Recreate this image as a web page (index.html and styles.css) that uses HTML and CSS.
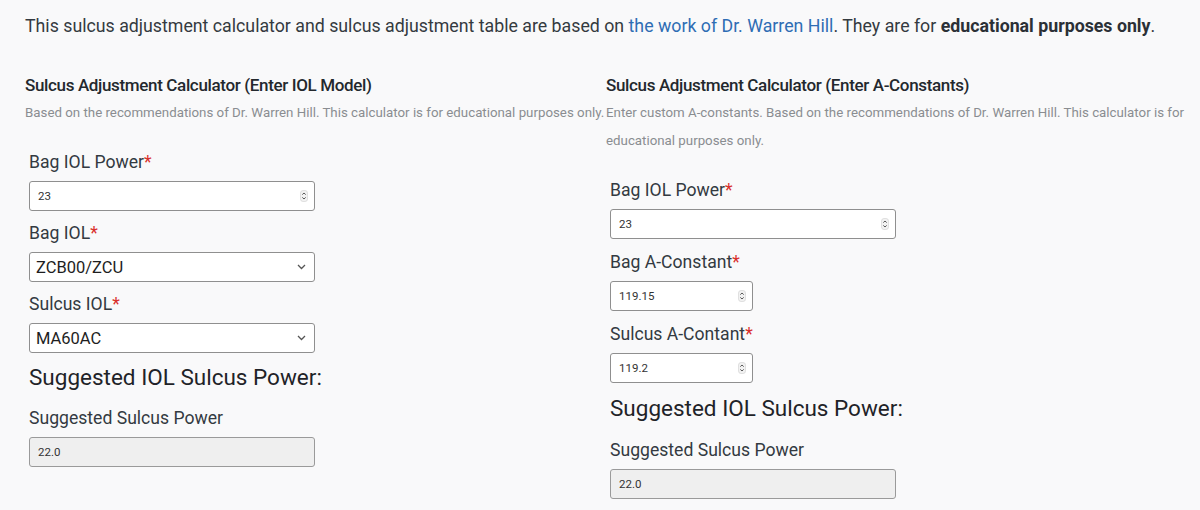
FILE: index.html
```html
<!DOCTYPE html>
<html lang="en">
<head>
<meta charset="utf-8">
<title>Sulcus Adjustment Calculator</title>
<link rel="stylesheet" href="styles.css">
</head>
<body>
<p class="intro">This sulcus adjustment calculator and sulcus adjustment table are based on <a href="#">the work of Dr. Warren Hill</a>. They are for <strong>educational purposes only</strong>.</p>
<div class="columns">
  <section class="calc">
    <h2>Sulcus Adjustment Calculator (Enter IOL Model)</h2>
    <p class="note">Based on the recommendations of Dr. Warren Hill. This calculator is for educational purposes only.</p>
    <div class="form">
      <div class="group">
        <label>Bag IOL Power<span class="req">*</span></label>
        <div class="field">
          <input type="text" value="23">
          <svg class="spin" width="8" height="12" viewBox="0 0 8 12"><rect x="0.5" y="0.5" width="7" height="11" rx="2.5" fill="#f2f2f2" stroke="#d0d0d0" stroke-width="0.6"/><path d="M2.3 4.6 L4 3 L5.7 4.6 M2.3 7.4 L4 9 L5.7 7.4" fill="none" stroke="#444" stroke-width="0.9"/></svg>
        </div>
      </div>
      <div class="group">
        <label>Bag IOL<span class="req">*</span></label>
        <div class="field select">
          <span class="val">ZCB00/ZCU</span>
          <svg class="chev" width="9" height="6" viewBox="0 0 9 6"><path d="M1 1 L4.5 4.5 L8 1" fill="none" stroke="#555" stroke-width="1.3"/></svg>
        </div>
      </div>
      <div class="group">
        <label>Sulcus IOL<span class="req">*</span></label>
        <div class="field select">
          <span class="val">MA60AC</span>
          <svg class="chev" width="9" height="6" viewBox="0 0 9 6"><path d="M1 1 L4.5 4.5 L8 1" fill="none" stroke="#555" stroke-width="1.3"/></svg>
        </div>
      </div>
      <h3>Suggested IOL Sulcus Power:</h3>
      <div class="group">
        <label>Suggested Sulcus Power</label>
        <div class="field output"><input type="text" value="22.0" readonly></div>
      </div>
    </div>
  </section>
  <section class="calc calc-const">
    <h2>Sulcus Adjustment Calculator (Enter A-Constants)</h2>
    <p class="note">Enter custom A-constants. Based on the recommendations of Dr. Warren Hill. This calculator is for educational purposes only.</p>
    <div class="form">
      <div class="group">
        <label>Bag IOL Power<span class="req">*</span></label>
        <div class="field">
          <input type="text" value="23">
          <svg class="spin" width="8" height="12" viewBox="0 0 8 12"><rect x="0.5" y="0.5" width="7" height="11" rx="2.5" fill="#f2f2f2" stroke="#d0d0d0" stroke-width="0.6"/><path d="M2.3 4.6 L4 3 L5.7 4.6 M2.3 7.4 L4 9 L5.7 7.4" fill="none" stroke="#444" stroke-width="0.9"/></svg>
        </div>
      </div>
      <div class="group">
        <label>Bag A-Constant<span class="req">*</span></label>
        <div class="field small">
          <input type="text" value="119.15">
          <svg class="spin" width="8" height="12" viewBox="0 0 8 12"><rect x="0.5" y="0.5" width="7" height="11" rx="2.5" fill="#f2f2f2" stroke="#d0d0d0" stroke-width="0.6"/><path d="M2.3 4.6 L4 3 L5.7 4.6 M2.3 7.4 L4 9 L5.7 7.4" fill="none" stroke="#444" stroke-width="0.9"/></svg>
        </div>
      </div>
      <div class="group">
        <label>Sulcus A-Contant<span class="req">*</span></label>
        <div class="field small">
          <input type="text" value="119.2">
          <svg class="spin" width="8" height="12" viewBox="0 0 8 12"><rect x="0.5" y="0.5" width="7" height="11" rx="2.5" fill="#f2f2f2" stroke="#d0d0d0" stroke-width="0.6"/><path d="M2.3 4.6 L4 3 L5.7 4.6 M2.3 7.4 L4 9 L5.7 7.4" fill="none" stroke="#444" stroke-width="0.9"/></svg>
        </div>
      </div>
      <h3>Suggested IOL Sulcus Power:</h3>
      <div class="group">
        <label>Suggested Sulcus Power</label>
        <div class="field output"><input type="text" value="22.0" readonly></div>
      </div>
    </div>
  </section>
</div>
</body>
</html>
```
FILE: styles.css
```css
html, body {
  margin: 0;
  padding: 0;
}
body {
  background: #f9f9fa;
  font-family: Roboto, "Liberation Sans", sans-serif;
  color: #2f353b;
  padding: 0 15px 0 25px;
}
.intro {
  margin: 0;
  padding-top: 13px;
  font-size: 17.75px;
  line-height: 26px;
  color: #343a40;
  white-space: nowrap;
}
.intro a {
  color: #2e6db4;
  text-decoration: none;
}
.intro strong {
  font-weight: 700;
  color: #2b3036;
}
.columns {
  display: grid;
  grid-template-columns: 581px 1fr;
  margin-top: 34px;
}
h2 {
  margin: 0;
  font-size: 17px;
  line-height: 24px;
  font-weight: 500;
  letter-spacing: -0.35px;
  color: #23282d;
}
.note {
  margin: 2px 0 0;
  font-size: 13.3px;
  line-height: 28px;
  color: #8a8d91;
}
.form {
  padding: 24px 0 0 4px;
}
.group {
  margin-bottom: 11px;
}
.calc-const .group {
  margin-bottom: 12px;
}
label {
  display: block;
  font-size: 17.6px;
  line-height: 22px;
  margin-bottom: 8px;
  color: #333a41;
}
.req {
  color: #d9302c;
}
.field {
  display: flex;
  align-items: center;
  width: 286px;
  height: 30px;
  box-sizing: border-box;
  border: 1px solid #8f8f8f;
  border-radius: 3px;
  background: #fff;
  padding: 0 6px 0 8px;
}
.field input {
  flex: 1;
  min-width: 0;
  border: 0;
  outline: 0;
  background: transparent;
  padding: 0;
  font-family: Roboto, "Liberation Sans", sans-serif;
  font-size: 11.5px;
  color: #333;
}
.field.small {
  width: 143px;
}
.select {
  padding: 0 8px 0 6px;
}
.select .val {
  flex: 1;
  font-size: 16.5px;
  color: #1e1e1e;
}
.output {
  background: #efefef;
  border-color: #9a9a9a;
}
h3 {
  margin: 6px 0 17px;
  font-size: 22.5px;
  line-height: 26px;
  font-weight: 400;
  color: #1f2328;
}
.calc-const h3 {
  margin-top: 7px;
  margin-bottom: 18px;
}
```
